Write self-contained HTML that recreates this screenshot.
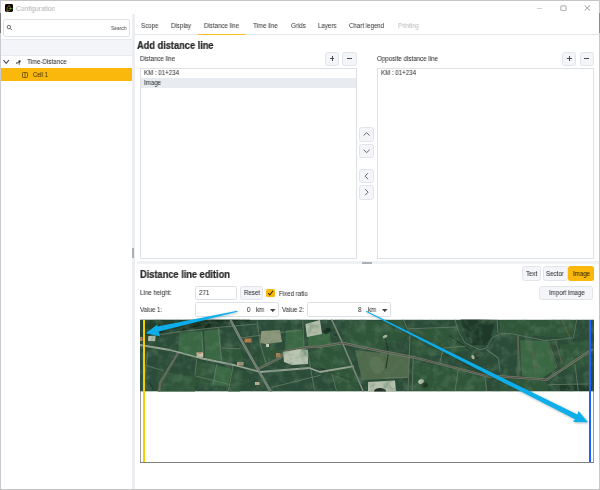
<!DOCTYPE html><html><head><meta charset="utf-8"><style>
html,body{margin:0;padding:0;}
body{width:600px;height:490px;position:relative;overflow:hidden;background:#fff;filter:blur(0.3px);font-family:"Liberation Sans",sans-serif;}
.t{position:absolute;white-space:nowrap;-webkit-text-stroke:0.04px currentColor;will-change:transform;transform-origin:0 0;}
.r{position:absolute;}
</style></head><body>
<div class="r" style="left:0.00px;top:0.00px;width:600.00px;height:1.00px;background:#c4c4c4"></div>
<div class="r" style="left:0.00px;top:0.00px;width:1.00px;height:490.00px;background:#c8ccd2"></div>
<div class="r" style="left:0.00px;top:13.00px;width:1.00px;height:20.00px;background:#7a7a7a"></div>
<div class="r" style="left:599.00px;top:0.00px;width:1.00px;height:490.00px;background:#c8c8c8"></div>
<div class="r" style="left:599.00px;top:13.00px;width:1.00px;height:19.60px;background:#8a8a8a"></div>
<div class="r" style="left:0.00px;top:489.00px;width:600.00px;height:1.00px;background:#c4c4c4"></div>
<svg class="r" style="left:5px;top:3.9px" width="8" height="8" viewBox="0 0 8 8">
<rect width="8" height="8" rx="1.4" fill="#050505"/>
<path d="M3.9 1.7 C2.6 2.4 2.1 3.8 2.1 5.4 L2.1 7.4 M2.2 6.9 C3.4 7.1 4.9 6.8 5.4 5.8 C5.8 4.8 5.3 2.9 4.3 1.9" stroke="#b8860c" stroke-width="0.75" fill="none"/>
<path d="M4.3 4.45 L7.7 4.45" stroke="#27b127" stroke-width="0.85"/>
<circle cx="4.2" cy="4.45" r="0.55" fill="#8a8a8a"/>
<circle cx="4.4" cy="1.6" r="0.7" fill="#a8400e"/>
<circle cx="2.1" cy="7.2" r="0.5" fill="#8a9a10"/>
</svg>
<div class="t" style="left:16.00px;top:4.81px;font-size:7.194px;line-height:7.194px;font-weight:normal;color:#b0b0b0;transform:scaleX(0.9174);-webkit-text-stroke:0">Configuration</div>
<div class="r" style="left:536.70px;top:7.80px;width:5.30px;height:0.80px;background:#d0d0d0"></div>
<svg class="r" style="left:559.5px;top:4.8px" width="7" height="6.5" viewBox="0 0 7 6.5"><rect x="0.9" y="0.9" width="5.2" height="4.8" rx="0.6" stroke="#9a9a9a" stroke-width="0.9" fill="none"/></svg>
<svg class="r" style="left:584px;top:5px" width="7" height="6" viewBox="0 0 7 6"><path d="M0.5 0.3 L6 5.7 M6 0.3 L0.5 5.7" stroke="#8c8c8c" stroke-width="0.8"/></svg>
<div class="r" style="left:3.00px;top:19.00px;width:126.80px;height:17.80px;border:1px solid #dde1e6;border-radius:2.5px;box-sizing:border-box;background:#fff"></div>
<svg class="r" style="left:6px;top:24px" width="7" height="7" viewBox="0 0 7 7"><circle cx="2.9" cy="3.1" r="1.7" stroke="#555" stroke-width="0.85" fill="none"/><path d="M4.2 4.4 L5.9 6.1" stroke="#555" stroke-width="0.95"/></svg>
<div class="t" style="left:111.10px;top:25.98px;font-size:5.341px;line-height:5.341px;font-weight:normal;color:#555;transform:scaleX(0.9174);">Search</div>
<div class="r" style="left:1.00px;top:38.80px;width:131.50px;height:16.80px;background:#f3f5f8;border-top:1px solid #e7eaee;border-bottom:1px solid #e7eaee;box-sizing:border-box"></div>
<svg class="r" style="left:3px;top:59px" width="7" height="6" viewBox="0 0 7 6"><path d="M0.5 1.1 L3.2 4.3 L5.9 1.1" stroke="#505050" stroke-width="1.15" fill="none"/></svg>
<svg class="r" style="left:15px;top:60px" width="7" height="6" viewBox="0 0 7 6"><circle cx="4.6" cy="1.3" r="1.15" fill="#2a2a2a"/><rect x="1" y="2.5" width="1.2" height="1.1" fill="#2a2a2a"/><path d="M2 3 L4 2 M4.2 2 L4.2 4.8" stroke="#2a2a2a" stroke-width="0.8"/></svg>
<div class="t" style="left:26.80px;top:59.48px;font-size:6.758px;line-height:6.758px;font-weight:normal;color:#2e2e2e;transform:scaleX(0.9174);">Time-Distance</div>
<div class="r" style="left:1.00px;top:68.00px;width:131.50px;height:12.70px;background:#fbb80c"></div>
<svg class="r" style="left:22px;top:72px" width="6" height="6" viewBox="0 0 6 6"><rect x="0.5" y="0.5" width="5" height="5" rx="0.8" stroke="#6b5200" stroke-width="0.9" fill="none"/><path d="M3 0.6 L3 5.4" stroke="#6b5200" stroke-width="0.7"/></svg>
<div class="t" style="left:33.25px;top:71.95px;font-size:6.322px;line-height:6.322px;font-weight:normal;color:#3a3000;transform:scaleX(0.9174);">Cell 1</div>
<div class="r" style="left:132.00px;top:14.00px;width:2.50px;height:475.00px;background:#eceef1"></div>
<div class="r" style="left:132.00px;top:248.00px;width:2.20px;height:10.20px;background:#aab0b8"></div>
<div class="r" style="left:133.50px;top:33.60px;width:465.50px;height:0.90px;background:#e3e6ea"></div>
<div class="t" style="left:140.80px;top:22.63px;font-size:6.704px;line-height:6.704px;font-weight:normal;color:#3a3a3a;transform:scaleX(0.9174);">Scope</div>
<div class="t" style="left:171.00px;top:22.63px;font-size:6.704px;line-height:6.704px;font-weight:normal;color:#3a3a3a;transform:scaleX(0.9174);">Display</div>
<div class="t" style="left:204.25px;top:22.63px;font-size:6.704px;line-height:6.704px;font-weight:normal;color:#3a3a3a;transform:scaleX(0.9174);">Distance line</div>
<div class="t" style="left:252.50px;top:22.63px;font-size:6.704px;line-height:6.704px;font-weight:normal;color:#3a3a3a;transform:scaleX(0.9174);">Time line</div>
<div class="t" style="left:290.50px;top:22.63px;font-size:6.704px;line-height:6.704px;font-weight:normal;color:#3a3a3a;transform:scaleX(0.9174);">Grids</div>
<div class="t" style="left:318.00px;top:22.63px;font-size:6.704px;line-height:6.704px;font-weight:normal;color:#3a3a3a;transform:scaleX(0.9174);">Layers</div>
<div class="t" style="left:348.70px;top:22.63px;font-size:6.704px;line-height:6.704px;font-weight:normal;color:#3a3a3a;transform:scaleX(0.9174);">Chart legend</div>
<div class="t" style="left:397.50px;top:22.63px;font-size:6.704px;line-height:6.704px;font-weight:normal;color:#bdbdbd;transform:scaleX(0.9174);">Printing</div>
<div class="r" style="left:197.50px;top:33.50px;width:48.50px;height:1.40px;background:#f9bd22"></div>
<div class="t" style="left:136.70px;top:40.64px;font-size:9.990px;line-height:9.990px;font-weight:bold;color:#262626;transform:scaleX(0.9259);-webkit-text-stroke:0.22px #262626">Add distance line</div>
<div class="t" style="left:139.70px;top:55.83px;font-size:6.704px;line-height:6.704px;font-weight:normal;color:#2e2e2e;transform:scaleX(0.9174);">Distance line</div>
<div class="t" style="left:377.10px;top:56.08px;font-size:6.758px;line-height:6.758px;font-weight:normal;color:#2e2e2e;transform:scaleX(0.9174);">Opposite distance line</div>
<div class="r" style="left:325.00px;top:51.50px;width:14.30px;height:14.00px;background:#f3f5f8;border:1px solid #e1e5ea;border-radius:2.5px;box-sizing:border-box;"></div>
<div class="r" style="left:329.80px;top:58.10px;width:4.70px;height:0.80px;background:#4a4a4a"></div>
<div class="r" style="left:331.75px;top:56.10px;width:0.80px;height:4.80px;background:#4a4a4a"></div>
<div class="r" style="left:342.30px;top:51.50px;width:14.30px;height:14.00px;background:#f3f5f8;border:1px solid #e1e5ea;border-radius:2.5px;box-sizing:border-box;"></div>
<div class="r" style="left:346.90px;top:58.10px;width:5.10px;height:0.90px;background:#4a4a4a"></div>
<div class="r" style="left:562.20px;top:51.50px;width:14.30px;height:14.00px;background:#f3f5f8;border:1px solid #e1e5ea;border-radius:2.5px;box-sizing:border-box;"></div>
<div class="r" style="left:567.00px;top:58.10px;width:4.70px;height:0.80px;background:#4a4a4a"></div>
<div class="r" style="left:568.95px;top:56.10px;width:0.80px;height:4.80px;background:#4a4a4a"></div>
<div class="r" style="left:579.50px;top:51.50px;width:14.30px;height:14.00px;background:#f3f5f8;border:1px solid #e1e5ea;border-radius:2.5px;box-sizing:border-box;"></div>
<div class="r" style="left:584.10px;top:58.10px;width:5.10px;height:0.90px;background:#4a4a4a"></div>
<div class="r" style="left:139.50px;top:68.30px;width:217.50px;height:190.30px;border:1px solid #dde1e6;box-sizing:border-box;background:#fff"></div>
<div class="r" style="left:140.50px;top:78.00px;width:215.50px;height:9.70px;background:#e8ebef"></div>
<div class="t" style="left:144.00px;top:70.33px;font-size:6.704px;line-height:6.704px;font-weight:normal;color:#2e2e2e;transform:scaleX(0.9174);">KM : 01+234</div>
<div class="t" style="left:144.00px;top:79.63px;font-size:6.704px;line-height:6.704px;font-weight:normal;color:#2e2e2e;transform:scaleX(0.9174);">Image</div>
<div class="r" style="left:377.30px;top:68.30px;width:216.70px;height:190.30px;border:1px solid #dde1e6;box-sizing:border-box;background:#fff"></div>
<div class="t" style="left:381.00px;top:70.43px;font-size:6.704px;line-height:6.704px;font-weight:normal;color:#2e2e2e;transform:scaleX(0.9174);">KM : 01+234</div>
<div class="r" style="left:359.10px;top:127.30px;width:15.20px;height:14.30px;background:#f3f5f8;border:1px solid #e1e5ea;border-radius:2.5px;box-sizing:border-box;"></div>
<svg class="r" style="left:359.10px;top:127.30px" width="15.2" height="14.3" viewBox="-7.6 -7.15 15.2 14.3"><path d="M-3 1.4 L0 -1.5 L3 1.4" stroke="#5f5f5f" stroke-width="0.95" fill="none"/></svg>
<div class="r" style="left:359.10px;top:143.80px;width:15.20px;height:14.30px;background:#f3f5f8;border:1px solid #e1e5ea;border-radius:2.5px;box-sizing:border-box;"></div>
<svg class="r" style="left:359.10px;top:143.80px" width="15.2" height="14.3" viewBox="-7.6 -7.15 15.2 14.3"><path d="M-3 -1.4 L0 1.5 L3 -1.4" stroke="#5f5f5f" stroke-width="0.95" fill="none"/></svg>
<div class="r" style="left:359.10px;top:169.00px;width:15.20px;height:14.30px;background:#f3f5f8;border:1px solid #e1e5ea;border-radius:2.5px;box-sizing:border-box;"></div>
<svg class="r" style="left:359.10px;top:169.00px" width="15.2" height="14.3" viewBox="-7.6 -7.15 15.2 14.3"><path d="M1.4 -3 L-1.5 0 L1.4 3" stroke="#5f5f5f" stroke-width="0.95" fill="none"/></svg>
<div class="r" style="left:359.10px;top:185.40px;width:15.20px;height:14.30px;background:#f3f5f8;border:1px solid #e1e5ea;border-radius:2.5px;box-sizing:border-box;"></div>
<svg class="r" style="left:359.10px;top:185.40px" width="15.2" height="14.3" viewBox="-7.6 -7.15 15.2 14.3"><path d="M-1.4 -3 L1.5 0 L-1.4 3" stroke="#5f5f5f" stroke-width="0.95" fill="none"/></svg>
<div class="r" style="left:137.00px;top:261.40px;width:462.00px;height:2.20px;background:#eff1f3"></div>
<div class="r" style="left:361.50px;top:261.60px;width:10.50px;height:2.00px;background:#aab0b8"></div>
<div class="t" style="left:140.40px;top:269.74px;font-size:9.990px;line-height:9.990px;font-weight:bold;color:#262626;transform:scaleX(0.9259);-webkit-text-stroke:0.22px #262626">Distance line edition</div>
<div class="r" style="left:521.60px;top:266.00px;width:19.80px;height:14.60px;background:#f3f5f8;border:1px solid #e1e5ea;border-radius:2.5px;box-sizing:border-box;"></div>
<div class="r" style="left:542.60px;top:266.00px;width:25.20px;height:14.60px;background:#f3f5f8;border:1px solid #e1e5ea;border-radius:2.5px;box-sizing:border-box;"></div>
<div class="r" style="left:568.30px;top:266.00px;width:25.70px;height:14.60px;background:#fbb80c;border-radius:2.5px"></div>
<div class="t" style="left:526.20px;top:270.83px;font-size:6.704px;line-height:6.704px;font-weight:normal;color:#2e2e2e;transform:scaleX(0.9174);">Text</div>
<div class="t" style="left:546.30px;top:270.83px;font-size:6.704px;line-height:6.704px;font-weight:normal;color:#2e2e2e;transform:scaleX(0.9174);">Sector</div>
<div class="t" style="left:572.60px;top:270.83px;font-size:6.704px;line-height:6.704px;font-weight:normal;color:#2a2400;transform:scaleX(0.9174);">Image</div>
<div class="r" style="left:539.20px;top:286.20px;width:54.30px;height:13.40px;background:#f3f5f8;border:1px solid #e1e5ea;border-radius:2.5px;box-sizing:border-box;"></div>
<div class="t" style="left:548.50px;top:290.23px;font-size:6.704px;line-height:6.704px;font-weight:normal;color:#2e2e2e;transform:scaleX(0.9174);">Import image</div>
<div class="t" style="left:140.00px;top:290.33px;font-size:6.704px;line-height:6.704px;font-weight:normal;color:#2e2e2e;transform:scaleX(0.9174);">Line height:</div>
<div class="r" style="left:195.30px;top:286.30px;width:41.90px;height:13.30px;border:1px solid #dde1e6;border-radius:2px;box-sizing:border-box;background:#fff"></div>
<div class="t" style="left:199.20px;top:290.13px;font-size:6.704px;line-height:6.704px;font-weight:normal;color:#2e2e2e;transform:scaleX(0.9174);">271</div>
<div class="r" style="left:240.00px;top:286.30px;width:23.40px;height:13.30px;background:#f3f5f8;border:1px solid #e1e5ea;border-radius:2.5px;box-sizing:border-box;"></div>
<div class="t" style="left:243.70px;top:290.13px;font-size:6.704px;line-height:6.704px;font-weight:normal;color:#2e2e2e;transform:scaleX(0.9174);">Reset</div>
<div class="r" style="left:266.20px;top:288.80px;width:9.10px;height:8.00px;background:#fbb80c;border-radius:1.5px"></div>
<svg class="r" style="left:266.2px;top:288.8px" width="9.1" height="8" viewBox="0 0 9.1 8"><path d="M2.2 4.1 L3.9 6.0 L6.9 1.9" stroke="#3a2e00" stroke-width="1.05" fill="none"/></svg>
<div class="t" style="left:278.80px;top:290.83px;font-size:6.704px;line-height:6.704px;font-weight:normal;color:#2e2e2e;transform:scaleX(0.9174);">Fixed ratio</div>
<div class="t" style="left:140.00px;top:307.33px;font-size:6.704px;line-height:6.704px;font-weight:normal;color:#2e2e2e;transform:scaleX(0.9174);">Value 1:</div>
<div class="r" style="left:195.30px;top:302.40px;width:84.00px;height:14.20px;border:1px solid #dde1e6;border-radius:2px;box-sizing:border-box;background:#fff"></div>
<div class="t" style="left:246.50px;top:307.43px;font-size:6.704px;line-height:6.704px;font-weight:normal;color:#2e2e2e;transform:scaleX(0.9174);">0</div>
<div class="t" style="left:255.50px;top:307.43px;font-size:6.704px;line-height:6.704px;font-weight:normal;color:#2e2e2e;transform:scaleX(0.9174);">km</div>
<svg class="r" style="left:270.20px;top:308.5px" width="5.5" height="3.2" viewBox="0 0 5.5 3.2"><path d="M0 0 L5.5 0 L2.75 3.2 Z" fill="#444"/></svg>
<div class="t" style="left:282.30px;top:307.33px;font-size:6.704px;line-height:6.704px;font-weight:normal;color:#2e2e2e;transform:scaleX(0.9174);">Value 2:</div>
<div class="r" style="left:307.30px;top:302.40px;width:83.40px;height:14.20px;border:1px solid #dde1e6;border-radius:2px;box-sizing:border-box;background:#fff"></div>
<div class="t" style="left:358.20px;top:307.43px;font-size:6.704px;line-height:6.704px;font-weight:normal;color:#2e2e2e;transform:scaleX(0.9174);">8</div>
<div class="t" style="left:367.70px;top:307.43px;font-size:6.704px;line-height:6.704px;font-weight:normal;color:#2e2e2e;transform:scaleX(0.9174);">km</div>
<svg class="r" style="left:382.20px;top:308.5px" width="5.5" height="3.2" viewBox="0 0 5.5 3.2"><path d="M0 0 L5.5 0 L2.75 3.2 Z" fill="#444"/></svg>
<div class="r" style="left:140.00px;top:319.50px;width:454.20px;height:143.50px;border:1px solid #9c9c9c;border-top:none;box-sizing:border-box;background:#fff"></div>
<div class="r" style="left:140.00px;top:462.00px;width:454.20px;height:1.00px;background:#808080"></div>
<svg class="r" style="left:0;top:0" width="600" height="490" viewBox="0 0 600 490"><defs><filter id="noise" x="0" y="0" width="100%" height="100%"><feTurbulence type="fractalNoise" baseFrequency="0.12" numOctaves="3" seed="4"/><feColorMatrix values="0 0 0 0 0.1  0 0 0 0 0.2  0 0 0 0 0.12  0 0 0 -2.2 1.25"/></filter><clipPath id="ic"><rect x="140" y="319.6" width="454" height="72.0"/></clipPath></defs><g clip-path="url(#ic)"><rect x="140" y="319.6" width="454" height="72.0" fill="#2b4c38" opacity="1"/><polygon points="180.0,333.0 202.0,331.0 204.0,357.0 178.0,353.0" fill="#3a6843" opacity="1"/><polygon points="204.0,331.0 220.0,329.0 222.0,361.0 205.0,358.0" fill="#3a6843" opacity="1"/><polygon points="196.0,361.0 216.0,365.0 212.0,385.0 195.0,383.0" fill="#30563a" opacity="1"/><polygon points="216.0,365.0 232.0,369.0 228.0,387.0 212.0,385.0" fill="#3a6843" opacity="1"/><polygon points="232.0,369.0 244.0,371.0 240.0,392.0 228.0,392.0" fill="#30563a" opacity="1"/><polygon points="222.0,347.0 240.0,348.0 244.0,362.0 222.0,361.0" fill="#30563a" opacity="1"/><polygon points="162.0,371.0 196.0,377.0 195.0,392.0 158.0,392.0" fill="#30563a" opacity="1"/><polygon points="262.0,345.0 282.0,351.0 266.0,366.0 258.0,368.0" fill="#30563a" opacity="1"/><polygon points="286.0,330.0 302.0,330.0 304.0,347.0 285.0,350.0" fill="#3a6843" opacity="1"/><polygon points="308.0,336.0 330.0,332.0 331.0,345.0 308.0,348.0" fill="#3a6843" opacity="1"/><polygon points="310.0,350.0 342.0,345.0 355.0,368.0 312.0,368.0" fill="#30563a" opacity="1"/><polygon points="322.0,366.0 353.0,366.0 360.0,391.0 340.0,391.0" fill="#30563a" opacity="1"/><polygon points="345.0,322.0 400.0,320.0 408.0,335.0 380.0,350.0 345.0,343.0" fill="#30563a" opacity="1"/><polygon points="355.0,350.0 410.0,356.0 408.0,378.0 362.0,380.0" fill="#57704f" opacity="0.85"/><ellipse cx="377" cy="365" rx="7" ry="9" fill="#6a7e5c" opacity="0.5" transform="rotate(-20 377 365)"/><polygon points="412.0,330.0 455.0,327.0 460.0,340.0 470.0,350.0 440.0,355.0 412.0,356.0" fill="#30563a" opacity="1"/><polygon points="412.0,360.0 488.0,377.0 486.0,391.0 412.0,391.0" fill="#30563a" opacity="1"/><polygon points="460.0,318.0 495.0,320.0 490.0,345.0 470.0,345.0" fill="#1d3727" opacity="0.9"/><polygon points="500.0,320.0 575.0,320.0 572.0,338.0 500.0,334.0" fill="#30563a" opacity="1"/><polygon points="520.0,340.0 548.0,341.0 556.0,368.0 540.0,380.0 522.0,376.0" fill="#3a6843" opacity="1"/><polygon points="560.0,345.0 590.0,340.0 592.0,360.0 575.0,372.0 560.0,368.0" fill="#30563a" opacity="1"/><polygon points="500.0,378.0 546.0,380.0 548.0,391.0 500.0,391.0" fill="#30563a" opacity="1"/><polygon points="560.0,384.0 592.0,384.0 592.0,391.0 560.0,391.0" fill="#1d3727" opacity="0.7"/><polygon points="140.0,319.6 240.0,319.6 240.0,325.0 200.0,329.0 160.0,333.0 140.0,336.0" fill="#1d3727" opacity="0.6"/><polygon points="178.0,330.0 195.0,325.0 205.0,321.0 212.0,319.6 250.0,319.6 250.0,320.5 212.0,322.0 210.0,328.0 205.0,329.0 203.0,325.0 190.0,329.0 180.0,332.0" fill="#16281b" opacity="0.9"/><polyline points="218.0,322.0 250.0,321.0" fill="none" stroke="#1e3324" stroke-width="1.3" opacity="0.8" stroke-linejoin="round" stroke-linecap="round"/><polyline points="385.0,338.0 388.0,350.0" fill="none" stroke="#1e3324" stroke-width="1.3" opacity="0.8" stroke-linejoin="round" stroke-linecap="round"/><polyline points="388.0,355.0 386.0,368.0" fill="none" stroke="#1e3324" stroke-width="1.3" opacity="0.8" stroke-linejoin="round" stroke-linecap="round"/><polyline points="150.0,383.0 153.0,389.0" fill="none" stroke="#1e3324" stroke-width="1.3" opacity="0.8" stroke-linejoin="round" stroke-linecap="round"/><polyline points="320.0,368.0 350.0,380.0" fill="none" stroke="#1e3324" stroke-width="1.3" opacity="0.8" stroke-linejoin="round" stroke-linecap="round"/><polyline points="450.0,336.0 470.0,350.0" fill="none" stroke="#1e3324" stroke-width="1.3" opacity="0.8" stroke-linejoin="round" stroke-linecap="round"/><polyline points="518.0,336.0 520.0,375.0" fill="none" stroke="#6a5e4c" stroke-width="1.0" opacity="0.9" stroke-linejoin="round" stroke-linecap="round"/><polyline points="530.0,340.0 536.0,375.0" fill="none" stroke="#6a5e4c" stroke-width="1.0" opacity="0.9" stroke-linejoin="round" stroke-linecap="round"/><polyline points="549.0,342.0 557.0,368.0" fill="none" stroke="#6a5e4c" stroke-width="1.0" opacity="0.9" stroke-linejoin="round" stroke-linecap="round"/><polyline points="556.0,342.0 562.0,364.0" fill="none" stroke="#6a5e4c" stroke-width="1.0" opacity="0.9" stroke-linejoin="round" stroke-linecap="round"/><polyline points="562.0,320.0 570.0,338.0" fill="none" stroke="#6a5e4c" stroke-width="1.0" opacity="0.9" stroke-linejoin="round" stroke-linecap="round"/><polyline points="160.0,334.7 181.7,331.3 220.0,327.2 240.0,325.5 257.0,324.0" fill="none" stroke="#6f806e" stroke-width="0.9" opacity="0.8" stroke-linejoin="round" stroke-linecap="round"/><polyline points="201.7,332.0 203.3,356.3" fill="none" stroke="#6f806e" stroke-width="0.9" opacity="0.8" stroke-linejoin="round" stroke-linecap="round"/><polyline points="218.3,328.0 221.7,361.3" fill="none" stroke="#6f806e" stroke-width="0.9" opacity="0.8" stroke-linejoin="round" stroke-linecap="round"/><polyline points="196.7,359.7 195.0,374.7" fill="none" stroke="#6f806e" stroke-width="0.9" opacity="0.8" stroke-linejoin="round" stroke-linecap="round"/><polyline points="196.7,376.3 230.0,384.7" fill="none" stroke="#6f806e" stroke-width="0.9" opacity="0.8" stroke-linejoin="round" stroke-linecap="round"/><polyline points="216.7,364.7 213.3,383.0" fill="none" stroke="#6f806e" stroke-width="0.9" opacity="0.8" stroke-linejoin="round" stroke-linecap="round"/><polyline points="233.3,364.7 228.3,391.3" fill="none" stroke="#6f806e" stroke-width="0.9" opacity="0.8" stroke-linejoin="round" stroke-linecap="round"/><polyline points="221.7,348.0 240.0,348.8" fill="none" stroke="#6f806e" stroke-width="0.9" opacity="0.8" stroke-linejoin="round" stroke-linecap="round"/><polyline points="146.4,365.5 163.4,370.8" fill="none" stroke="#6f806e" stroke-width="0.9" opacity="0.8" stroke-linejoin="round" stroke-linecap="round"/><polyline points="148.0,352.0 146.0,366.0 143.0,392.0" fill="none" stroke="#6f806e" stroke-width="0.9" opacity="0.8" stroke-linejoin="round" stroke-linecap="round"/><polyline points="257.3,321.0 260.0,343.3 266.7,366.0" fill="none" stroke="#6f806e" stroke-width="0.9" opacity="0.8" stroke-linejoin="round" stroke-linecap="round"/><polyline points="302.7,319.6 304.0,347.3 308.0,352.7 314.7,392.0" fill="none" stroke="#6f806e" stroke-width="0.9" opacity="0.8" stroke-linejoin="round" stroke-linecap="round"/><polyline points="272.0,387.3 309.3,378.0 320.0,375.3" fill="none" stroke="#6f806e" stroke-width="0.9" opacity="0.8" stroke-linejoin="round" stroke-linecap="round"/><polyline points="331.7,373.0 336.7,391.3" fill="none" stroke="#6f806e" stroke-width="0.9" opacity="0.8" stroke-linejoin="round" stroke-linecap="round"/><polyline points="403.3,319.6 410.0,334.7 408.0,391.0" fill="none" stroke="#6f806e" stroke-width="0.9" opacity="0.8" stroke-linejoin="round" stroke-linecap="round"/><polyline points="383.3,378.0 406.7,377.2" fill="none" stroke="#6f806e" stroke-width="0.9" opacity="0.8" stroke-linejoin="round" stroke-linecap="round"/><polyline points="408.3,328.8 456.7,327.0" fill="none" stroke="#6f806e" stroke-width="0.9" opacity="0.8" stroke-linejoin="round" stroke-linecap="round"/><polyline points="455.0,319.6 458.3,331.3 465.0,343.0 480.0,349.7 486.7,348.0 491.7,338.0 500.0,333.8 510.0,333.5 545.0,340.5 573.3,338.0 576.7,319.6" fill="none" stroke="#6f806e" stroke-width="0.9" opacity="0.8" stroke-linejoin="round" stroke-linecap="round"/><polyline points="497.0,319.6 498.0,333.0" fill="none" stroke="#6f806e" stroke-width="0.9" opacity="0.8" stroke-linejoin="round" stroke-linecap="round"/><polyline points="486.7,349.7 498.3,358.0 500.0,371.3" fill="none" stroke="#6f806e" stroke-width="0.9" opacity="0.8" stroke-linejoin="round" stroke-linecap="round"/><polyline points="486.7,350.0 498.0,358.0" fill="none" stroke="#6f806e" stroke-width="0.9" opacity="0.8" stroke-linejoin="round" stroke-linecap="round"/><polyline points="465.0,346.3 443.3,348.0 440.0,362.0" fill="none" stroke="#6f806e" stroke-width="0.9" opacity="0.8" stroke-linejoin="round" stroke-linecap="round"/><polyline points="458.3,369.7 455.0,391.0" fill="none" stroke="#6f806e" stroke-width="0.9" opacity="0.8" stroke-linejoin="round" stroke-linecap="round"/><polyline points="485.0,378.0 486.7,391.0" fill="none" stroke="#6f806e" stroke-width="0.9" opacity="0.8" stroke-linejoin="round" stroke-linecap="round"/><polyline points="413.3,358.0 412.0,391.0" fill="none" stroke="#6f806e" stroke-width="0.9" opacity="0.8" stroke-linejoin="round" stroke-linecap="round"/><polyline points="575.0,364.7 578.3,391.0" fill="none" stroke="#6f806e" stroke-width="0.9" opacity="0.8" stroke-linejoin="round" stroke-linecap="round"/><polyline points="548.3,384.7 591.0,384.0" fill="none" stroke="#6f806e" stroke-width="0.9" opacity="0.8" stroke-linejoin="round" stroke-linecap="round"/><polyline points="518.0,336.0 518.0,376.0" fill="none" stroke="#6f806e" stroke-width="0.9" opacity="0.8" stroke-linejoin="round" stroke-linecap="round"/><polyline points="300.0,330.0 240.0,338.0" fill="none" stroke="#6f806e" stroke-width="0.9" opacity="0.8" stroke-linejoin="round" stroke-linecap="round"/><polyline points="178.0,353.0 160.0,383.0 159.0,392.0" fill="none" stroke="#6b6d60" stroke-width="2.4" opacity="0.9" stroke-linejoin="round" stroke-linecap="round"/><polyline points="140.0,345.0 170.0,350.0 200.0,358.0 234.0,365.0 260.0,372.0 309.3,368.0 320.0,372.0 353.0,366.3" fill="none" stroke="#9aa596" stroke-width="1.8" opacity="1" stroke-linejoin="round" stroke-linecap="round"/><polyline points="320.0,347.0 342.5,343.0" fill="none" stroke="#7f8c7d" stroke-width="1.6" opacity="1" stroke-linejoin="round" stroke-linecap="round"/><polyline points="331.7,319.6 342.5,343.0 363.3,391.6" fill="none" stroke="#7f8c7d" stroke-width="1.5" opacity="1" stroke-linejoin="round" stroke-linecap="round"/><polyline points="258.7,368.7 280.0,358.0 285.3,351.3 305.3,347.3 320.0,346.7 342.5,343.0 378.0,350.5 416.7,358.0 488.0,376.3 500.0,376.3 546.7,379.7 591.7,349.7" fill="none" stroke="#7a8070" stroke-width="2.3" opacity="1" stroke-linejoin="round" stroke-linecap="round"/><polyline points="258.7,368.7 280.0,358.0 285.3,351.3 305.3,347.3 320.0,346.7 342.5,343.0 378.0,350.5 416.7,358.0 488.0,376.3 500.0,376.3 546.7,379.7 591.7,349.7" fill="none" stroke="#4a4238" stroke-width="0.9" opacity="0.85" stroke-linejoin="round" stroke-linecap="round"/><polyline points="231.0,321.0 240.0,338.0 257.0,368.0 270.7,391.6" fill="none" stroke="#8a958b" stroke-width="2.4" opacity="1" stroke-linejoin="round" stroke-linecap="round"/><polyline points="231.0,321.0 240.0,338.0 257.0,368.0 270.7,391.6" fill="none" stroke="#58625a" stroke-width="0.8" opacity="0.8" stroke-linejoin="round" stroke-linecap="round"/><polygon points="261.3,331.0 280.0,330.0 282.0,342.0 266.0,344.0 260.0,343.0" fill="#8d977c" opacity="1"/><polygon points="283.0,352.0 300.0,349.0 308.0,350.0 308.0,364.0 292.0,365.0 284.0,362.0" fill="#b8c4b0" opacity="1"/><polygon points="305.3,324.0 320.0,320.0 322.0,334.0 307.0,337.0" fill="#b2bda9" opacity="1"/><polygon points="368.0,382.0 395.0,380.5 396.0,391.6 368.0,391.6" fill="#b6c2ae" opacity="1"/><polygon points="148.3,336.0 155.8,335.5 155.0,341.3 148.0,341.0" fill="#b6c2ae" opacity="1"/><ellipse cx="421" cy="381.5" rx="3" ry="2.2" fill="#b6c2ae" opacity="1" transform="rotate(-30 421 381.5)"/><ellipse cx="425" cy="385" rx="3" ry="2.5" fill="#1a3020" opacity="0.8" transform="rotate(0 425 385)"/><ellipse cx="477" cy="355" rx="3.5" ry="4" fill="#1a3020" opacity="0.9" transform="rotate(20 477 355)"/><ellipse cx="473" cy="357" rx="1.6" ry="2.4" fill="#a9b59e" opacity="1" transform="rotate(-20 473 357)"/><ellipse cx="385" cy="336.5" rx="2.5" ry="1.3" fill="#a9b59e" opacity="1" transform="rotate(-25 385 336.5)"/><ellipse cx="380" cy="391" rx="6" ry="3" fill="#10201a" opacity="0.9" transform="rotate(0 380 391)"/><ellipse cx="327" cy="331" rx="4" ry="2.5" fill="#15281d" opacity="0.8" transform="rotate(-30 327 331)"/><ellipse cx="335" cy="334.5" rx="1.8" ry="1.5" fill="#15281d" opacity="0.8" transform="rotate(0 335 334.5)"/><rect x="196.5" y="352.5" width="6.5" height="5.0" fill="#cfc6b4" opacity="1"/><rect x="198.5" y="352" width="3.0" height="2" fill="#c88a5a" opacity="1"/><rect x="244.5" y="338.5" width="7.0" height="4.0" fill="#b87a4a" opacity="1"/><rect x="276" y="353" width="4.5" height="4.5" fill="#b87e50" opacity="1"/><rect x="237" y="362" width="6.5" height="3.5" fill="#c0a080" opacity="1"/><rect x="255" y="382" width="4.5" height="3" fill="#c8b098" opacity="1"/><rect x="140" y="337" width="2.5" height="4" fill="#b88050" opacity="1"/><rect x="266" y="344" width="3" height="3" fill="#d8d4c4" opacity="1"/><rect x="140" y="319.6" width="454" height="72.0" filter="url(#noise)" opacity="0.6"/></g></svg>
<div class="r" style="left:143.00px;top:319.60px;width:2.00px;height:142.40px;background:#f5cf00"></div>
<div class="r" style="left:589.00px;top:319.60px;width:1.70px;height:142.40px;background:#1f5ffc"></div>
<svg class="r" style="left:0;top:0" width="600" height="490" viewBox="0 0 600 490">
<defs><filter id="sh" x="-10%" y="-10%" width="120%" height="130%"><feDropShadow dx="0.6" dy="0.8" stdDeviation="0.8" flood-color="#000" flood-opacity="0.35"/></filter></defs>
<g filter="url(#sh)" fill="#0caeea">
<path d="M237.4 310.8 L237.4 311.8 L158.5 331.5 L160 336.3 L145.7 333.3 L157.7 324.3 L157.3 326.5 Z"/>
<path d="M366.2 310.7 L366.0 311.7 L575.0 419.3 L573 422 L588 422.3 L578.5 411 L577.4 414.6 Z"/>
</g></svg>
</body></html>
